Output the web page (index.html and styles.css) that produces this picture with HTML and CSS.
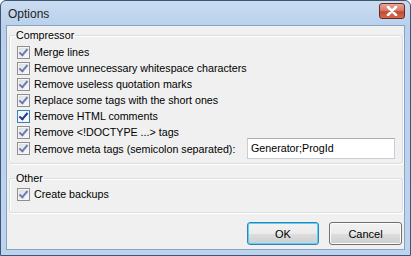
FILE: index.html
```html
<html lang="en">
    <head>
        <title>Options</title>
        <link rel="stylesheet" href="styles.css">
    </head>
    <body>
        <div class="window">
            <div class="titlebar">
                <span class="title">Options</span>
                <span class="close">
                    <svg width="12" height="10" viewBox="0 0 12 10">
                        <path d="M2 1 L10 9 M10 1 L2 9" stroke="#fff" stroke-width="2.6" stroke-linecap="round"/>
                    </svg>
                </span>
            </div>
            <div class="client">
                <fieldset class="group group-compressor">
                    <legend>Compressor</legend>
                    <label class="row"><span class="check"></span>Merge lines</label>
                    <label class="row"><span class="check"></span>Remove unnecessary whitespace characters</label>
                    <label class="row"><span class="check"></span>Remove useless quotation marks</label>
                    <label class="row"><span class="check"></span>Replace some tags with the short ones</label>
                    <label class="row"><span class="check hot"></span>Remove HTML comments</label>
                    <label class="row"><span class="check"></span>Remove &lt;!DOCTYPE ...&gt; tags</label>
                    <div class="row row-input">
                        <label class="row-label"><span class="check"></span>Remove meta tags (semicolon separated):</label>
                        <div class="textbox">Generator;ProgId</div>
                    </div>
                </fieldset>
                <fieldset class="group group-other">
                    <legend>Other</legend>
                    <label class="row"><span class="check"></span>Create backups</label>
                </fieldset>
                <div class="buttons">
                    <button type="button" class="btn btn-default">OK</button>
                    <button type="button" class="btn">Cancel</button>
                </div>
            </div>
        </div>
    </body>
</html>
```
FILE: styles.css
```css
body {
    margin: 0;
    font-family: "Liberation Sans", Arial, sans-serif;
    font-size: 10.7px;
    color: #000;
}

.window {
    width: 411px;
    height: 256px;
    box-sizing: border-box;
    border: 1px solid #3e5573;
    border-radius: 6px 6px 0 0;
    background: linear-gradient(#cbdcf0, #b9d1ec 24px, #bcd4ee);
    padding: 0 5px 5px 5px;
    display: flex;
    flex-direction: column;
}

.titlebar {
    height: 24px;
    display: flex;
    align-items: center;
    justify-content: space-between;
    padding: 0 2px;
}
.title {
    font-size: 12px;
    color: #1e1e1e;
    padding-top: 1px;
}
.close {
    width: 26px;
    height: 16px;
    margin-right: -2px;
    margin-top: -5px;
    box-sizing: border-box;
    border: 1px solid #6b2a22;
    border-radius: 3px;
    background: linear-gradient(#e8a493, #d47f6c 45%, #c24a34 55%, #d56a4c);
    display: flex;
    align-items: center;
    justify-content: center;
}

.client {
    flex: 1;
    background: #f0f0f0;
    border: 1px solid #8aa3c0;
    display: flex;
    flex-direction: column;
}

.group {
    margin: 3px 1px 0 2px;
    padding: 3px 6px 4px 7px;
    border: 1px solid #d5dfe5;
    border-radius: 3px;
    box-shadow: inset 1px 1px 0 #fff, 1px 1px 0 #fff;
}
.group legend {
    padding: 0 1px;
    margin-left: -2px;
}
.group-other {
    margin-top: 8px;
    padding-top: 2px;
    padding-bottom: 10px;
}

.row {
    display: flex;
    align-items: center;
    height: 16px;
}
.row-input {
    height: 21px;
    margin-top: -2px;
    justify-content: space-between;
}
.row-label {
    display: flex;
    align-items: center;
}

.check {
    width: 13px;
    height: 13px;
    box-sizing: border-box;
    margin-right: 4px;
    border: 1px solid #8f8f8f;
    background: linear-gradient(135deg, #dcdcdc, #fbfbfb);
    box-shadow: inset 0 0 0 1px #f4f4f4;
    position: relative;
}
.check::after {
    content: "";
    position: absolute;
    left: 3px;
    top: 0px;
    width: 3px;
    height: 7px;
    border: solid #6a7fb5;
    border-width: 0 2px 2px 0;
    transform: rotate(40deg);
}
.check.hot {
    border-color: #3c7fb1;
    background: linear-gradient(135deg, #def9fa, #fff);
}
.check.hot::after {
    border-color: #21359c;
}

.textbox {
    width: 148px;
    height: 21px;
    box-sizing: border-box;
    border: 1px solid #c7cdd4;
    border-top-color: #abadb3;
    background: #fff;
    padding: 3px 3px 0 3px;
    margin-right: 1px;
}

.buttons {
    display: flex;
    justify-content: flex-end;
    gap: 10px;
    margin-top: auto;
    padding: 0 2px 4px 0;
}
.btn {
    width: 73px;
    height: 23px;
    font-family: inherit;
    font-size: 11px;
    border: 1px solid #707070;
    border-radius: 3px;
    background: linear-gradient(#f2f2f2, #ebebeb 50%, #dddddd 51%, #cfcfcf);
    box-shadow: inset 0 0 0 1px #fcfcfc;
    padding: 0;
}
.btn-default {
    width: 72px;
    border-color: #3c7fb1;
    box-shadow: inset 0 0 0 1px #48d8fb;
}
```
